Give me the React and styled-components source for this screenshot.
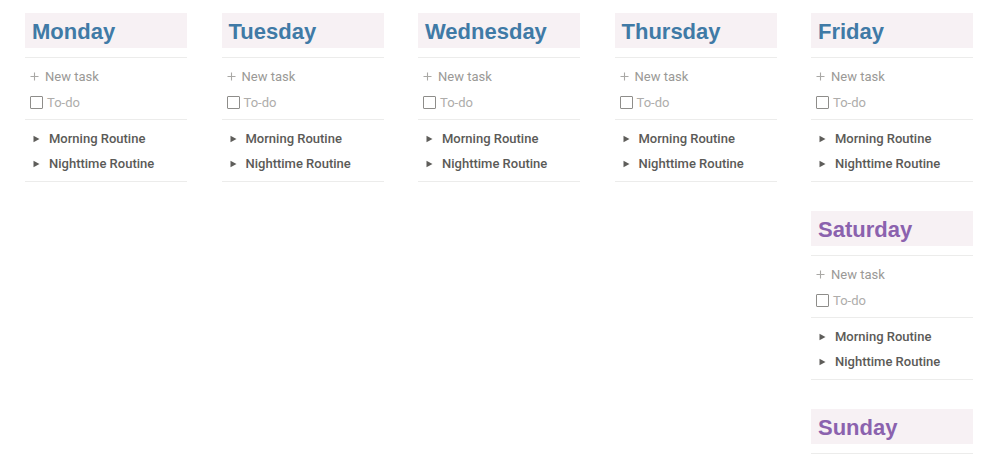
import React from "react";
import styled, { createGlobalStyle } from "styled-components";

const Global = createGlobalStyle`
  html, body { margin: 0; padding: 0; background: #ffffff; }
  body { font-family: Roboto, "Liberation Sans", sans-serif; -webkit-font-smoothing: antialiased; }
`;

const Board = styled.div`
  display: grid;
  grid-template-columns: repeat(5, 162px);
  column-gap: 34.5px;
  padding: 13px 0 0 25px;
  align-items: start;
`;

const Column = styled.div`
  display: flex;
  flex-direction: column;
  gap: 29px;
`;

const Section = styled.section`
  display: flex;
  flex-direction: column;
`;

const Header = styled.div`
  height: 35px;
  background: #f7f1f4;
  display: flex;
  align-items: center;
  padding: 2px 0 0 7px;
  box-sizing: border-box;
  font-family: "Liberation Sans", Arial, sans-serif;
  font-weight: 700;
  font-size: 22px;
  color: ${(p) => (p.$tone === "purple" ? "#8b62ae" : "#407aa6")};
  margin-bottom: 9px;
`;

const Divider = styled.div`
  height: 1px;
  background: #ececeb;
`;

const Group = styled.div`
  display: flex;
  flex-direction: column;
  padding: ${(p) => p.$pad};
`;

const Row = styled.div`
  display: flex;
  align-items: center;
  height: ${(p) => p.$h}px;
  padding-left: ${(p) => p.$indent}px;
  gap: ${(p) => p.$gap}px;
  font-size: 13px;
  white-space: nowrap;
`;

const Muted = styled.span`
  color: ${(p) => (p.$light ? "#aeadab" : "#9a9996")};
`;

const Bold = styled.span`
  color: #5b5a57;
  font-weight: 500;
  font-size: 13px;
`;

const Box = styled.span`
  width: 13px;
  height: 13px;
  box-sizing: border-box;
  border: 1.5px solid #8e8d8a;
  border-radius: 1px;
  display: inline-block;
`;

const Plus = () => (
  <svg width="9" height="9" viewBox="0 0 9 9">
    <path d="M4.5 0.5v8M0.5 4.5h8" stroke="#a9a8a5" strokeWidth="1.1" fill="none" />
  </svg>
);

const Caret = () => (
  <svg width="7" height="8" viewBox="0 0 7 8">
    <polygon points="0.5,0.8 6.5,4 0.5,7.2" fill="#5e5d5a" />
  </svg>
);

const Day = ({ name, tone }) => (
  <Section>
    <Header $tone={tone}>{name}</Header>
    <Divider />
    <Group $pad="5px 0 4px 0">
      <Row $h={26} $indent={5} $gap={6}>
        <Plus />
        <Muted>New task</Muted>
      </Row>
      <Row $h={26} $indent={5} $gap={4}>
        <Box />
        <Muted $light>To-do</Muted>
      </Row>
    </Group>
    <Divider />
    <Group $pad="6px 0 5px 0">
      <Row $h={25} $indent={8} $gap={9}>
        <Caret />
        <Bold>Morning Routine</Bold>
      </Row>
      <Row $h={25} $indent={8} $gap={9}>
        <Caret />
        <Bold>Nighttime Routine</Bold>
      </Row>
    </Group>
    <Divider />
  </Section>
);

export default function App() {
  return (
    <>
      <Global />
      <Board>
        <Column><Day name="Monday" /></Column>
        <Column><Day name="Tuesday" /></Column>
        <Column><Day name="Wednesday" /></Column>
        <Column><Day name="Thursday" /></Column>
        <Column>
          <Day name="Friday" />
          <Day name="Saturday" tone="purple" />
          <Day name="Sunday" tone="purple" />
        </Column>
      </Board>
    </>
  );
}
